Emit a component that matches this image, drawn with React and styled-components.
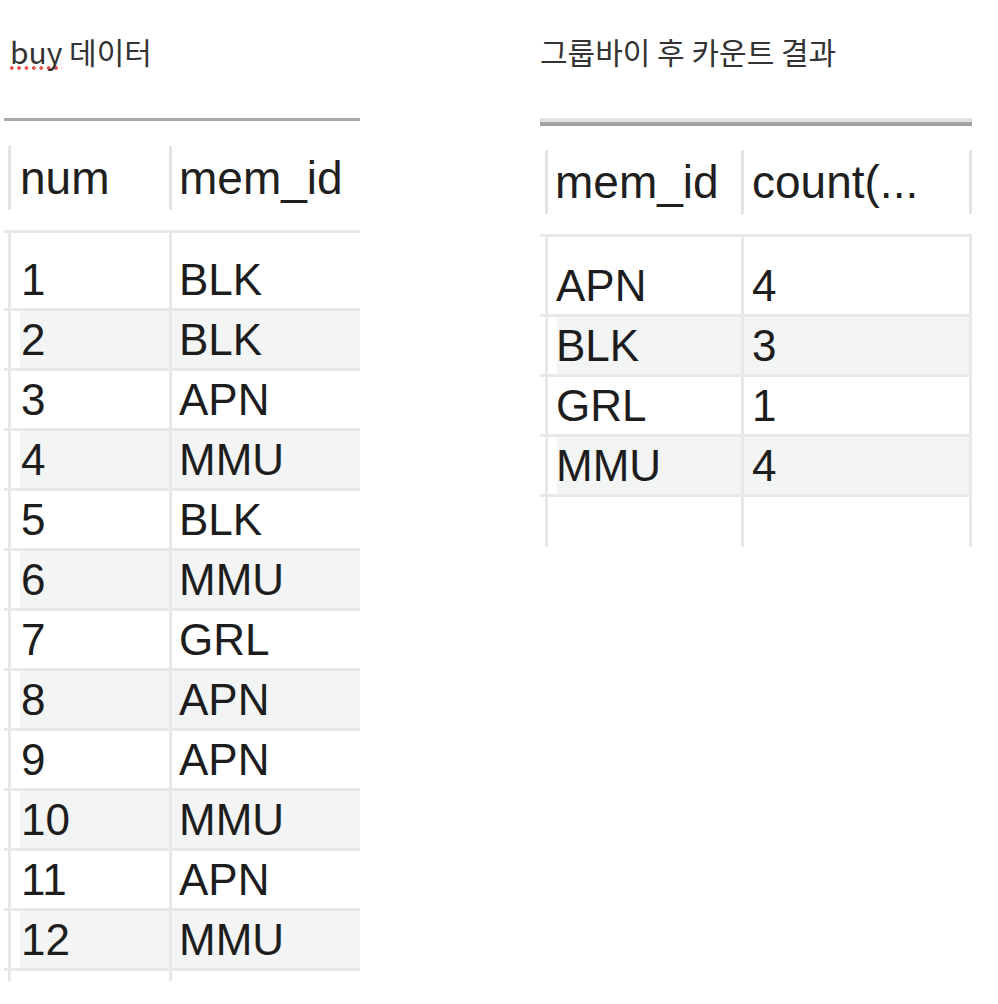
import React from "react";
import styled, { createGlobalStyle } from "styled-components";

const Global = createGlobalStyle`
  html, body { margin: 0; padding: 0; background: #ffffff; }
  body { font-family: "Liberation Sans", Arial, sans-serif; color: #1d1d1d; }
`;

const LINE = "#e8e8e8";
const SHADE = "#f3f4f4";

const Page = styled.div`
  display: flex;
  align-items: flex-start;
  gap: 180px;
  padding: 33px 0 0 4px;
  width: 998px;
  height: 1004px;
  box-sizing: border-box;
  overflow: hidden;
`;

const Panel = styled.section`
  display: flex;
  flex-direction: column;
  width: ${(p) => p.$width}px;
  flex: none;
`;

const Title = styled.h2`
  margin: 0 0 ${(p) => p.$below}px ${(p) => p.$indent}px;
  font-family: "Noto Sans CJK KR", "Noto Sans", sans-serif;
  font-weight: 400;
  font-size: 30px;
  line-height: 36px;
  color: #333333;
  white-space: nowrap;
`;

const Misspelt = styled.span`
  background-image: radial-gradient(circle, #ea5753 1.7px, transparent 2.1px);
  background-repeat: repeat-x;
  background-size: 7.4px 4px;
  background-position: -2px calc(100% - 3px);
`;

const Rule = styled.div`
  height: ${(p) => (p.$double ? 4 : 3)}px;
  background: ${(p) => (p.$double ? "#a4a4a4" : "#a9a9a9")};
  border-top: ${(p) => (p.$double ? "4px solid #e2e2e2" : "none")};
  margin-top: ${(p) => (p.$double ? -4 : 0)}px;
`;

const HeaderRow = styled.div`
  display: flex;
  padding-left: ${(p) => p.$inset}px;
  margin-top: ${(p) => p.$gap}px;
  padding-bottom: 20px;
  border-bottom: 3px solid ${LINE};
`;

const HeadCell = styled.div`
  box-sizing: border-box;
  flex: ${(p) => (p.$w ? `0 0 ${p.$w}px` : "1 1 auto")};
  min-width: 0;
  height: 64px;
  line-height: 64px;
  font-size: 46px;
  padding-left: ${(p) => p.$pad}px;
  border-left: 3px solid #e4e4e4;
  border-right: ${(p) => (p.$closed ? "3px solid #e4e4e4" : "none")};
  white-space: nowrap;
  overflow: hidden;
  color: #1f1f1f;
`;

const BodyRow = styled.div`
  display: flex;
  padding-left: ${(p) => p.$inset}px;
  border-bottom: ${(p) => (p.$open ? "none" : `3px solid ${LINE}`)};
`;

const Cell = styled.div`
  box-sizing: border-box;
  flex: ${(p) => (p.$w ? `0 0 ${p.$w}px` : "1 1 auto")};
  min-width: 0;
  height: ${(p) => p.$h + p.$extra}px;
  padding-top: ${(p) => p.$extra}px;
  padding-left: ${(p) => p.$pad}px;
  line-height: 57px;
  font-size: 44px;
  border-left: 3px solid ${LINE};
  border-right: ${(p) => (p.$closed ? `3px solid ${LINE}` : "none")};
  white-space: nowrap;
  overflow: hidden;
  color: #1d1d1d;
  background: ${(p) =>
    !p.$shade
      ? "#ffffff"
      : p.$lead
      ? `linear-gradient(to right, #ffffff 9px, ${SHADE} 9px)`
      : SHADE};
`;

function DataTable({ columns, rows, inset, gap, extra, double, closed, filler }) {
  const last = columns.length - 1;
  return (
    <div>
      <Rule $double={double} />
      <HeaderRow $inset={inset} $gap={gap}>
        {columns.map((c, i) => (
          <HeadCell key={c.label} $w={c.w} $pad={c.headPad} $closed={closed && i === last}>
            {c.label}
          </HeadCell>
        ))}
      </HeaderRow>
      {rows.map((r, ri) => (
        <BodyRow key={ri} $inset={inset}>
          {r.map((v, ci) => (
            <Cell
              key={ci}
              $w={columns[ci].w}
              $pad={columns[ci].pad}
              $h={57}
              $extra={ri === 0 ? extra : 0}
              $shade={ri % 2 === 1}
              $lead={ci === 0}
              $closed={closed && ci === last}
            >
              {v}
            </Cell>
          ))}
        </BodyRow>
      ))}
      <BodyRow $inset={inset} $open>
        {columns.map((c, ci) => (
          <Cell key={ci} $w={c.w} $pad={c.pad} $h={filler} $extra={0} $closed={closed && ci === last} />
        ))}
      </BodyRow>
    </div>
  );
}

const buyRows = [
  ["1", "BLK"],
  ["2", "BLK"],
  ["3", "APN"],
  ["4", "MMU"],
  ["5", "BLK"],
  ["6", "MMU"],
  ["7", "GRL"],
  ["8", "APN"],
  ["9", "APN"],
  ["10", "MMU"],
  ["11", "APN"],
  ["12", "MMU"],
];

const countRows = [
  ["APN", "4"],
  ["BLK", "3"],
  ["GRL", "1"],
  ["MMU", "4"],
];

export default function App() {
  return (
    <>
      <Global />
      <Page>
        <Panel $width={356}>
          <Title $indent={6} $below={49}>
            <Misspelt>buy</Misspelt> 데이터
          </Title>
          <DataTable
            columns={[
              { label: "num", w: 161, pad: 10, headPad: 9 },
              { label: "mem_id", pad: 7, headPad: 7 },
            ]}
            rows={buyRows}
            inset={4}
            gap={25}
            extra={18}
            filler={10}
          />
        </Panel>
        <Panel $width={432}>
          <Title $indent={0} $below={53}>
            그룹바이 후 카운트 결과
          </Title>
          <DataTable
            columns={[
              { label: "mem_id", w: 196, pad: 8, headPad: 7 },
              { label: "count(...", pad: 8, headPad: 8 },
            ]}
            rows={countRows}
            inset={5}
            gap={24}
            extra={20}
            double
            closed
            filler={50}
          />
        </Panel>
      </Page>
    </>
  );
}
